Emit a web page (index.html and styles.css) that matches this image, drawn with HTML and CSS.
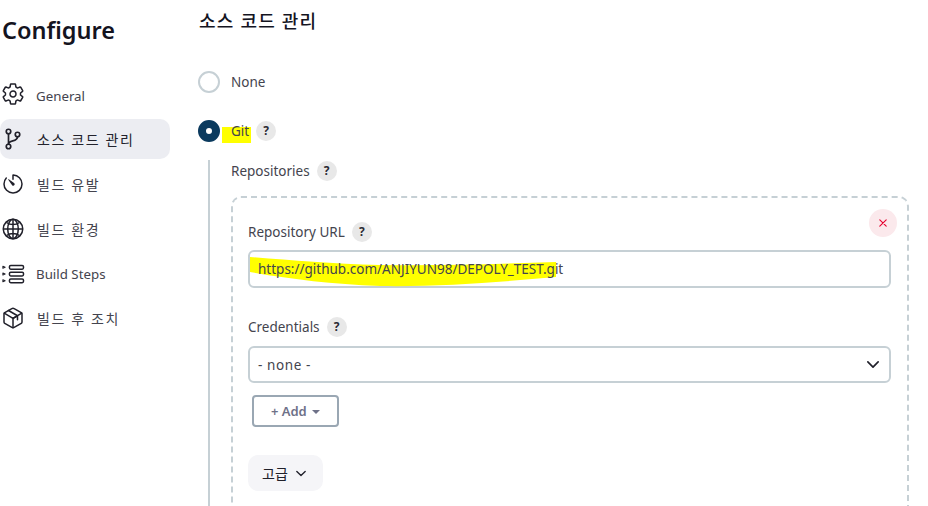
FILE: index.html
```html
<!DOCTYPE html>
<html lang="ko">
<head>
<meta charset="utf-8">
<title>Configure</title>
<link rel="stylesheet" href="styles.css">
</head>
<body>
<div class="page">
  <aside class="sidebar">
    <h1 class="page-title">Configure</h1>
    <nav class="nav">
      <a class="nav-item">
        <svg class="nav-icon" viewBox="0 0 512 512" fill="none" stroke="currentColor" stroke-width="32" stroke-linecap="round" stroke-linejoin="round"><path d="M262.29 192.31a64 64 0 1057.4 57.4 64.13 64.13 0 00-57.4-57.4zM416.39 256a154.34 154.34 0 01-1.53 20.79l45.21 35.46a10.81 10.81 0 012.45 13.75l-42.77 74a10.81 10.81 0 01-13.14 4.59l-44.9-18.08a16.11 16.11 0 00-15.17 1.75A164.48 164.48 0 01325 400.8a15.94 15.94 0 00-8.82 12.14l-6.73 47.89a11.08 11.08 0 01-10.68 9.17h-85.54a11.11 11.11 0 01-10.69-8.87l-6.72-47.82a16.07 16.07 0 00-9-12.22 155.3 155.3 0 01-21.46-12.57 16 16 0 00-15.11-1.71l-44.89 18.07a10.81 10.81 0 01-13.14-4.58l-42.77-74a10.8 10.8 0 012.45-13.75l38.21-30a16.05 16.05 0 006-14.08c-.36-4.17-.58-8.33-.58-12.5s.21-8.27.58-12.35a16 16 0 00-6.07-13.94l-38.19-30A10.81 10.81 0 0149.48 186l42.77-74a10.81 10.81 0 0113.14-4.59l44.9 18.08a16.11 16.11 0 0015.17-1.75A164.48 164.48 0 01187 111.2a15.94 15.94 0 008.82-12.14l6.73-47.89A11.08 11.08 0 01213.23 42h85.54a11.11 11.11 0 0110.69 8.87l6.72 47.82a16.07 16.07 0 009 12.22 155.3 155.3 0 0121.46 12.57 16 16 0 0015.11 1.71l44.89-18.07a10.81 10.81 0 0113.14 4.58l42.77 74a10.8 10.8 0 01-2.45 13.75l-38.21 30a16.05 16.05 0 00-6.05 14.08c.33 4.14.55 8.3.55 12.47z"/></svg>
        <span>General</span>
      </a>
      <a class="nav-item is-active">
        <svg class="nav-icon" viewBox="0 0 512 512" fill="none" stroke="currentColor" stroke-width="36" stroke-linecap="round" stroke-linejoin="round"><circle cx="160" cy="96" r="48"/><circle cx="160" cy="416" r="48"/><path d="M160 368V144"/><circle cx="352" cy="160" r="48"/><path d="M352 208c0 128-192 48-192 160"/></svg>
        <span class="ko">소스 코드 관리</span>
      </a>
      <a class="nav-item">
        <svg class="nav-icon" viewBox="0 0 512 512" fill="none" stroke="currentColor" stroke-width="32" stroke-linecap="round" stroke-linejoin="round"><path d="M112.91 128A191.85 191.85 0 0064 254c-1.18 106.35 85.65 193.8 192 194 106.2.2 192-85.83 192-192 0-104.54-83.55-189.61-187.5-192a4.36 4.36 0 00-4.5 4.37V152"/><path d="M233.38 278.63l-79-113a8.13 8.13 0 0111.32-11.32l113 79a32.5 32.5 0 01-37.25 53.26 33.21 33.21 0 01-8.07-7.94z" fill="currentColor" stroke="none"/></svg>
        <span class="ko">빌드 유발</span>
      </a>
      <a class="nav-item">
        <svg class="nav-icon" viewBox="0 0 512 512" fill="none" stroke="currentColor" stroke-width="32" stroke-miterlimit="10"><path d="M256 48C141.13 48 48 141.13 48 256s93.13 208 208 208 208-93.13 208-208S370.87 48 256 48z"/><path d="M256 48c-58.07 0-112.67 93.13-112.67 208S197.93 464 256 464s112.67-93.13 112.67-208S314.07 48 256 48z"/><path d="M117.33 117.33c38.24 27.15 86.38 43.34 138.67 43.34s100.43-16.19 138.67-43.34M394.67 394.67c-38.24-27.15-86.38-43.34-138.67-43.34s-100.43 16.19-138.67 43.34M256 48v416M464 256H48"/></svg>
        <span class="ko">빌드 환경</span>
      </a>
      <a class="nav-item nav-steps">
        <svg class="nav-icon" viewBox="0 0 512 512" fill="none" stroke="currentColor" stroke-width="32" stroke-linecap="round" stroke-linejoin="round"><rect x="180" y="72" width="300" height="80" rx="28"/><rect x="180" y="216" width="300" height="80" rx="28"/><rect x="180" y="360" width="300" height="80" rx="28"/><path d="M40 92l48 20-48 20zM40 236l48 20-48 20zM40 380l48 20-48 20z" stroke-width="22"/></svg>
        <span>Build Steps</span>
      </a>
      <a class="nav-item">
        <svg class="nav-icon" viewBox="0 0 512 512" fill="none" stroke="currentColor" stroke-width="32" stroke-linecap="round" stroke-linejoin="round"><path d="M448 341.37V170.61A32 32 0 00432.11 143l-152-88.46a47.94 47.94 0 00-48.24 0L79.89 143A32 32 0 0064 170.61v170.76A32 32 0 0079.89 369l152 88.46a48 48 0 0048.24 0l152-88.46A32 32 0 00448 341.37z"/><path d="M69 153.99l187 110 187-110M256 463.99v-200"/><path d="M160 96l192 112v84M352 208l-96 56"/></svg>
        <span class="ko">빌드 후 조치</span>
      </a>
    </nav>
  </aside>

  <main class="main">
    <h2 class="section-title">소스 코드 관리</h2>
    <div class="radio-row radio-none">
      <span class="radio"></span>
      <span class="radio-label">None</span>
    </div>
    <div class="radio-row radio-git">
      <span class="radio is-checked"></span>
      <span class="radio-label">Git<i class="mark-git"></i></span>
      <span class="help">?</span>
    </div>
    <div class="nested">
      <div class="label-row repositories">
        <span class="label">Repositories</span>
        <span class="help">?</span>
      </div>
      <div class="repeat">
        <button class="delete" type="button" aria-label="Delete">
          <svg viewBox="0 0 10 10" width="8" height="8" fill="none" stroke="currentColor" stroke-width="1.4" stroke-linecap="round"><path d="M1 1l8 8M9 1l-8 8"/></svg>
        </button>
        <div class="label-row">
          <span class="label">Repository URL</span>
          <span class="help">?</span>
        </div>
        <div class="field url-field"><span class="url-text">https://github.com/ANJIYUN98/DEPOLY_TEST.git</span>
          <svg class="mark-url" viewBox="0 0 306 30" preserveAspectRatio="none"><path d="M0 0 C 40 3 80 7 130 8 C 190 9 250 7 306 5 L 306 20 C 250 25 190 30 130 29 C 80 27 40 22 0 15 Z" fill="#ffff00"/></svg>
        </div>
        <div class="label-row credentials">
          <span class="label">Credentials</span>
          <span class="help">?</span>
        </div>
        <div class="field select-field">
          <span>- none -</span>
          <svg class="chevron" viewBox="0 0 14 8" width="12" height="7" fill="none" stroke="currentColor" stroke-width="1.9" stroke-linecap="round" stroke-linejoin="round"><path d="M1 1l6 6 6-6"/></svg>
        </div>
        <button class="add" type="button">+ Add <i class="caret"></i></button>
        <button class="advanced" type="button">고급
          <svg viewBox="0 0 12 8" width="10" height="7" fill="none" stroke="currentColor" stroke-width="1.6" stroke-linecap="round" stroke-linejoin="round"><path d="M1 1.5l5 5 5-5"/></svg>
        </button>
      </div>
    </div>
  </main>
</div>
</body>
</html>
```
FILE: styles.css
```css
* { box-sizing: border-box; }
html, body { margin: 0; height: 100%; overflow: hidden; background: #fff; }
body {
  font-family: "Noto Sans", "Noto Sans CJK KR", sans-serif;
  color: #14141f;
}
.page { display: flex; height: 506px; overflow: hidden; }

.sidebar { width: 199px; flex: none; padding-right: 29px; }
.page-title {
  margin: 13px 0 0 2px;
  font-size: 23.5px;
  line-height: 34px;
  font-weight: 600;
  color: #14141f;
}
.nav { display: flex; flex-direction: column; margin-top: 29px; }
.nav-item {
  display: flex;
  align-items: center;
  gap: 11px;
  height: 40px;
  margin-bottom: 5px;
  padding-left: 1px;
  border-radius: 10px;
  font-size: 13.3px;
  color: #44444e;
}
.nav-item:first-child { margin-bottom: 3px; }
.nav-item:first-child .nav-icon { margin-top: -4px; }
.nav-steps.nav-item { margin-bottom: 4px; }
.nav-item.is-active { background: #ecedf2; color: #22222c; }
.nav-item .ko { font-size: 14px; letter-spacing: 1.6px; margin-left: 1px; }
.nav-icon { width: 24px; height: 24px; flex: none; color: #20202a; }

.main { flex: 1; min-width: 0; }
.section-title {
  margin: 9px 0 0;
  font-size: 18px;
  line-height: 24px;
  font-weight: 500;
  letter-spacing: 1.2px;
  color: #14141f;
}
.radio-row { display: flex; align-items: center; height: 22px; }
.radio-none { margin-top: 38px; }
.radio-git { margin-top: 27px; }
.radio {
  width: 22px;
  height: 22px;
  flex: none;
  margin-left: -1px;
  border-radius: 50%;
  border: 2px solid #c6d0d5;
  background: #fff;
}
.radio.is-checked { border: 8px solid #0b3a5e; }
.radio-label { margin-left: 11px; font-size: 13.5px; color: #44444e; position: relative; z-index: 0; }
.mark-git {
  position: absolute;
  z-index: -1;
  left: -9px;
  top: 5px;
  width: 29px;
  height: 16px;
  background: #ffff00;
}
.help {
  width: 20px;
  height: 20px;
  flex: none;
  margin-left: 7px;
  border-radius: 50%;
  background: #e8e8e8;
  color: #2a2a33;
  font-size: 12px;
  font-weight: 700;
  line-height: 20px;
  text-align: center;
}

.nested {
  margin: 18px 0 0 9px;
  padding-left: 21px;
  border-left: 2px solid #c6d0d5;
  height: 400px;
}
.label-row { display: flex; align-items: center; height: 20px; }
.repositories { padding-top: 1px; height: 21px; }
.label { font-size: 13.5px; color: #44444e; }
.repeat {
  position: relative;
  width: 678px;
  height: 330px;
  margin-top: 15px;
  padding: 24px 18px 0 15px;
  border: 2px dashed #c6d0d5;
  border-radius: 10px;
}
.delete {
  position: absolute;
  top: 11px;
  right: 10px;
  width: 28px;
  height: 28px;
  padding: 0;
  display: flex;
  align-items: center;
  justify-content: center;
  border: 0;
  border-radius: 50%;
  background: #fbe9ec;
  color: #e6002e;
}
.field {
  display: flex;
  align-items: center;
  position: relative;
  z-index: 0;
  width: 643px;
  height: 38px;
  margin-top: 8px;
  padding: 0 8px;
  border: 2px solid #c6d0d5;
  border-radius: 6px;
  font-size: 13.5px;
  color: #44444e;
}
.url-text { position: relative; }
.mark-url {
  position: absolute;
  z-index: -1;
  left: 0;
  top: 5px;
  width: 306px;
  height: 30px;
}
.credentials { margin-top: 29px; }
.select-field { justify-content: space-between; letter-spacing: .6px; margin-top: 9px; height: 37px; }
.chevron { color: #20202a; margin-right: 2px; }
.add {
  display: block;
  width: 87px;
  height: 32px;
  margin: 12px 0 0 4px;
  border: 2px solid #9aa7b3;
  border-radius: 4px;
  background: #fff;
  font: 600 13px "Noto Sans", sans-serif;
  color: #6e7188;
}
.caret {
  display: inline-block;
  margin: 0 0 2px 2px;
  border: 4px solid transparent;
  border-top-color: #6e7188;
  border-bottom: 0;
}
.advanced {
  display: flex;
  align-items: center;
  gap: 8px;
  width: 75px;
  height: 36px;
  margin-top: 28px;
  padding: 0 0 0 14px;
  border: 0;
  border-radius: 10px;
  background: #f5f5f8;
  font: 400 14px "Noto Sans CJK KR", sans-serif;
  color: #20202a;
}
```
